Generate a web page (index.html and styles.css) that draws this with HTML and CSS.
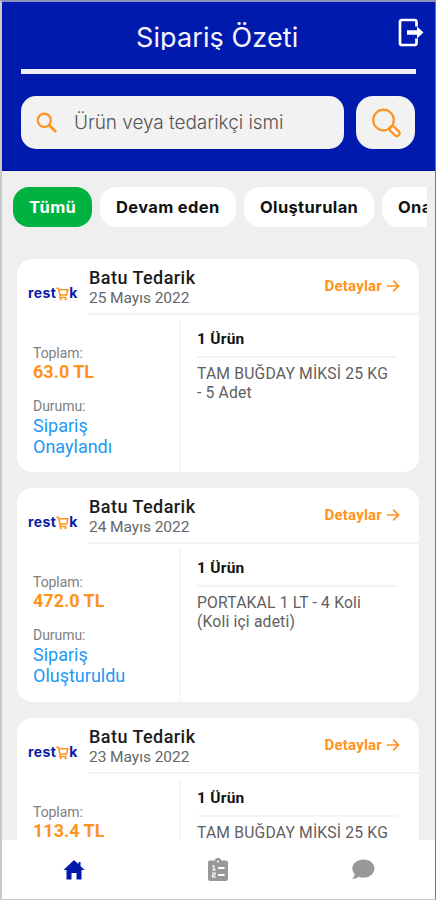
FILE: index.html
```html
<!DOCTYPE html>
<html lang="tr">
<head>
<meta charset="utf-8">
<title>Sipariş Özeti</title>
<link rel="stylesheet" href="styles.css">
</head>
<body>
<svg class="defs" width="0" height="0">
  <symbol id="arrow" viewBox="0 0 14 14"><path d="M1 7h11M7.2 1.700 12.500 7l-5.300 5.300" fill="none" stroke="currentColor" stroke-width="1.700"/></symbol>
  <symbol id="cart" viewBox="0 0 13 14"><path d="M.3 1.200h2l1.700 6.800h6.600l1.300-5.300H2.800M4 8v2.400h6.500" fill="none" stroke="#ff9320" stroke-width="1.500"/><circle cx="4.700" cy="12.200" r="1.100" fill="#ff9320"/><circle cx="9.500" cy="12.200" r="1.100" fill="#ff9320"/></symbol>
</svg>
<div class="app">
  <header class="header">
    <div class="title-row">
      <h1 class="title">Sipariş Özeti</h1>
      <svg class="logout" width="27" height="30" viewBox="0 0 27 30"><path d="M18.500 8.500V4q0-2-2-2H4Q2 2 2 4v21q0 2 2 2h12.500q2 0 2-2v-4.500" fill="none" stroke="#fff" stroke-width="2.700"/><path d="M9 12.200h10V8.500l6.500 6-6.500 6v-3.800H9z" fill="#fff"/></svg>
    </div>
    <div class="rule"></div>
    <div class="search-row">
      <div class="search">
        <svg width="22" height="22" viewBox="0 0 22 22" fill="none" stroke="#ff9320"><circle cx="8.300" cy="8.300" r="6.600" stroke-width="2.200"/><path d="m12.800 12.800 7.200 7.200" stroke-width="2.800"/></svg>
        <span class="placeholder">Ürün veya tedarikçi ismi</span>
      </div>
      <div class="search-button">
        <svg width="30" height="30" viewBox="0 0 30 30" fill="none" stroke="#ff9320" stroke-width="2.200"><circle cx="12.500" cy="12" r="10.300"/><rect x="17.500" y="20.300" width="12" height="5.600" rx="2.800" transform="rotate(45 23.500 23.100)"/></svg>
      </div>
    </div>
  </header>
  <nav class="chips">
    <span class="chip chip-all">Tümü</span>
    <span class="chip chip-active-orders">Devam eden</span>
    <span class="chip chip-created">Oluşturulan</span>
    <span class="chip chip-approved">Onaylanan</span>
  </nav>
  <main class="list">
    <article class="card">
      <div class="logo"><span>rest</span><svg width="13" height="14"><use href="#cart"/></svg><span>k</span></div>
      <div class="card-head"><div><h2>Batu Tedarik</h2><p class="date">25 Mayıs 2022</p></div><a class="more"><span>Detaylar</span><svg width="14" height="14"><use href="#arrow"/></svg></a></div>
      <div class="summary"><p class="label">Toplam:</p><p class="total">63.0 TL</p><p class="label state-label">Durumu:</p><p class="state">Sipariş<br>Onaylandı</p></div>
      <div class="products"><h3>1 Ürün</h3><p>TAM BUĞDAY MİKSİ 25 KG<br>- 5 Adet</p></div>
    </article>
    <article class="card">
      <div class="logo"><span>rest</span><svg width="13" height="14"><use href="#cart"/></svg><span>k</span></div>
      <div class="card-head"><div><h2>Batu Tedarik</h2><p class="date">24 Mayıs 2022</p></div><a class="more"><span>Detaylar</span><svg width="14" height="14"><use href="#arrow"/></svg></a></div>
      <div class="summary"><p class="label">Toplam:</p><p class="total">472.0 TL</p><p class="label state-label">Durumu:</p><p class="state">Sipariş<br>Oluşturuldu</p></div>
      <div class="products"><h3>1 Ürün</h3><p>PORTAKAL 1 LT - 4 Koli<br>(Koli içi adeti)</p></div>
    </article>
    <article class="card">
      <div class="logo"><span>rest</span><svg width="13" height="14"><use href="#cart"/></svg><span>k</span></div>
      <div class="card-head"><div><h2>Batu Tedarik</h2><p class="date">23 Mayıs 2022</p></div><a class="more"><span>Detaylar</span><svg width="14" height="14"><use href="#arrow"/></svg></a></div>
      <div class="summary"><p class="label">Toplam:</p><p class="total">113.4 TL</p></div>
      <div class="products"><h3>1 Ürün</h3><p>TAM BUĞDAY MİKSİ 25 KG</p></div>
    </article>
  </main>
  <footer class="tabs">
    <svg width="22" height="20" viewBox="0 0 22 20"><path d="M11 0 .5 10h3v9.500H8.500V13h5v6.500h5V10h3L17.500 6V2h-2v2.200z" fill="#0019ac"/></svg>
    <svg width="22" height="24" viewBox="0 0 22 24"><path d="M3 2.500h4.700a3.400 3.400 0 0 1 6.600 0H19a2 2 0 0 1 2 2V21a2 2 0 0 1-2 2H3a2 2 0 0 1-2-2V4.500a2 2 0 0 1 2-2z" fill="#989898"/><circle cx="11" cy="3.500" r="1" fill="#fff"/><path d="M11 10h6.500M11 17h6.500" stroke="#fff" stroke-width="2.200"/><path d="M5 8h2v4m-2 0h4M5 15h3v2H5.500v2H9" fill="none" stroke="#fff" stroke-width="1.200"/></svg>
    <svg width="24" height="21" viewBox="0 0 24 21"><path d="M12.500.5C6.200.5 1.300 4.500 1.300 9.500c0 2.200.9 4.100 2.500 5.700C3.500 17 2.500 18.800 1 20c2.700 0 5-1 6.500-2.300 1.500.6 3.200.9 5 .9 6.200 0 11-4 11-9.100s-4.800-9-11-9z" fill="#989898"/></svg>
  </footer>
</div>
</body>
</html>
```
FILE: styles.css
```css
* { box-sizing: border-box; margin: 0; padding: 0; }
body { width: 436px; height: 900px; overflow: hidden; font-family: Roboto, "Liberation Sans", sans-serif; background: #efefef; }
svg { display: block; flex: none; }
.defs { position: absolute; }
.app { width: 436px; height: 900px; display: flex; flex-direction: column; border: solid; border-width: 2px 1px 1px 2px; border-color: #8d91bd #77777d #c8c8c8 #c9c9c9; overflow: hidden; }
.header { flex: none; height: 169px; padding: 0 19px; background: #001aad; border-bottom: 1px solid #000f9b; }
.title-row { height: 67px; display: grid; grid-template-columns: 1fr 27px; margin-right: -9px; }
.title { grid-area: 1 / 1 / 2 / 3; height: 48px; overflow: hidden; padding-left: 115px; font: 400 27px/34px Inter, sans-serif; letter-spacing: .1px; padding-top: 19px; color: #f5f3ff; white-space: nowrap; }
.logout { grid-area: 1 / 2; margin-top: 16px; }
.rule { height: 5px; background: #f1efff; }
.search-row { display: flex; gap: 12px; margin-top: 22px; }
.search { width: 323px; height: 53px; display: flex; align-items: center; padding-left: 15px; gap: 16px; background: #f2f2f2; border-radius: 15px; }
.placeholder { font: 300 19px Inter, sans-serif; letter-spacing: -.05px; color: #555; white-space: nowrap; }
.search-button { width: 59px; height: 53px; background: #f2f2f2; border-radius: 17px; display: grid; place-items: center; }
.chips { flex: none; height: 56px; padding: 16px 0 0 11px; margin-right: 8px; display: flex; gap: 8px; overflow: hidden; }
.chip { flex: none; height: 40px; line-height: 40px; border-radius: 16px; background: #fff; color: #111; font-family: Inter, sans-serif; font-weight: 700; font-size: 16.500px; letter-spacing: .35px; padding-left: 16px; white-space: nowrap; }
.chip-all { width: 79px; background: #00b23f; color: #fff; }
.chip-active-orders { width: 136px; }
.chip-created { width: 130px; }
.chip-approved { width: 130px; }
.list { flex: 1; min-height: 0; overflow: hidden; display: flex; flex-direction: column; gap: 16px; padding: 31.600px 16px 0 15px; }
.card { flex: none; height: 213.700px; border-radius: 15px; background: #fff; display: grid; grid-template-columns: 71px 93px 1fr; grid-template-rows: 56px 1fr; overflow: hidden; }
.logo { display: flex; padding: 23px 0 0 11px; color: #0a1aa8; font: 700 14px/22px Inter, sans-serif; letter-spacing: .4px; }
.logo svg { margin-top: 5px; }
.card-head { grid-column: 2 / 4; border-bottom: 2px solid #f4f4f4; display: flex; justify-content: space-between; padding: 8px 19px 0 1px; }
h2 { font-size: 18px; line-height: 22px; font-weight: 500; letter-spacing: .45px; color: #1c1c1c; }
.date { font-size: 15.500px; line-height: 18px; letter-spacing: -.05px; color: #666; }
.more { display: flex; gap: 4px; align-items: center; height: 38px; font-weight: 700; font-size: 15px; letter-spacing: .2px; color: #ff9320; }
.summary { grid-column: 1 / 3; margin-top: 5px; border-right: 2px solid #f6f6f6; padding: 24px 0 0 16px; }
.label { font-size: 14px; line-height: 18px; letter-spacing: -.05px; color: #808080; }
.total { font-size: 18px; line-height: 20px; font-weight: 700; color: #ff9320; }
.state-label { margin-top: 15px; }
.state { font-size: 18px; line-height: 21px; color: #2299f5; }
.products { padding: 14px 22px 0 16px; }
h3 { font-size: 15.500px; line-height: 20px; font-weight: 700; letter-spacing: .25px; color: #111; padding-bottom: 7px; border-bottom: 2px solid #f4f4f4; }
.products p { font-size: 15.700px; line-height: 19px; letter-spacing: .17px; color: #606060; margin-top: 6px; white-space: nowrap; }
.tabs { flex: none; height: 59px; background: #fff; display: grid; grid-template-columns: repeat(3, 1fr); place-items: center; }
```
